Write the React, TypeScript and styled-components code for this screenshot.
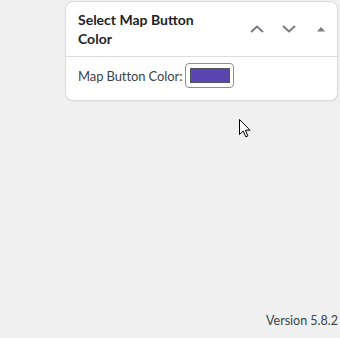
import React from "react";
import styled, { createGlobalStyle } from "styled-components";

const GlobalStyle = createGlobalStyle`
  html, body {
    margin: 0;
    padding: 0;
    background: #f0f0f1;
  }
  body {
    font-family: "Segoe UI", Lato, "Noto Sans", sans-serif;
    color: #1d2327;
  }
`;

function ChevronIcon({ up }: { up?: boolean }) {
  return (
    <svg width="16" height="10" viewBox="0 0 16 10" aria-hidden="true">
      <path
        d={up ? "M2 8 L8 2.5 L14 8" : "M2 2 L8 7.5 L14 2"}
        fill="none"
        stroke="#787c82"
        strokeWidth="2"
      />
    </svg>
  );
}

function TriangleIcon() {
  return (
    <svg width="10" height="6" viewBox="0 0 10 6" aria-hidden="true">
      <path d="M1 5.5 L5 1 L9 5.5 Z" fill="#787c82" />
    </svg>
  );
}

function Cursor() {
  return (
    <CursorStyle width="12" height="19" viewBox="0 0 12 19" aria-hidden="true">
      <path
        d="M0.5 0.5 L0.5 15.5 L4.2 12 L6.8 17.8 L8.9 16.9 L6.4 11.2 L11 11.2 Z"
        fill="#ffffff"
        stroke="#000000"
        strokeWidth="1"
        strokeLinejoin="round"
      />
    </CursorStyle>
  );
}

function App() {
  return (
    <>
      <GlobalStyle />
      <Page>
        <PanelArea>
          <Postbox>
            <PostboxHeader>
              <PostboxTitle>Select Map Button Color</PostboxTitle>
              <HandleActions>
                <HandleButton aria-label="Move up">
                  <ChevronIcon up />
                </HandleButton>
                <HandleButton aria-label="Move down">
                  <ChevronIcon />
                </HandleButton>
                <HandleButton aria-label="Toggle panel">
                  <TriangleIcon />
                </HandleButton>
              </HandleActions>
            </PostboxHeader>
            <PostboxInside>
              <FieldLabel>Map Button Color:</FieldLabel>
              <ColorButton aria-label="Pick color">
                <ColorSwatch color="#5b45b0" />
              </ColorButton>
            </PostboxInside>
          </Postbox>
        </PanelArea>
        <Footer>Version 5.8.2</Footer>
        <Cursor />
      </Page>
    </>
  );
}

const Page = styled.div`
  position: relative;
  min-height: 338px;
  display: flex;
  flex-direction: column;
  box-sizing: border-box;
`;

const PanelArea = styled.div`
  padding: 1px 2px 0 65px;
`;

const Postbox = styled.div`
  background: #ffffff;
  border: 1px solid #dcdcde;
  border-radius: 8px;
  box-shadow: 0 1px 1px rgba(0, 0, 0, 0.04);
`;

const PostboxHeader = styled.div`
  display: flex;
  align-items: center;
  justify-content: space-between;
  border-bottom: 1px solid #dcdcde;
  padding: 8px 0 8px 12px;
  min-height: 38px;
`;

const PostboxTitle = styled.h2`
  margin: 0;
  width: 150px;
  font-size: 14px;
  font-weight: 700;
  line-height: 19px;
  color: #1d2327;
`;

const HandleActions = styled.div`
  display: flex;
  align-items: center;
`;

const HandleButton = styled.button`
  width: 32px;
  height: 36px;
  padding: 0;
  border: 0;
  background: transparent;
  display: flex;
  align-items: center;
  justify-content: center;
  cursor: pointer;
`;

const PostboxInside = styled.div`
  display: flex;
  align-items: center;
  gap: 3px;
  padding: 6px 12px 12px;
`;

const FieldLabel = styled.span`
  font-size: 13px;
  letter-spacing: -0.1px;
  color: #3c434a;
`;

const ColorButton = styled.button`
  width: 49px;
  height: 25px;
  padding: 0;
  box-sizing: border-box;
  border: 1px solid #8c8f94;
  border-radius: 4px;
  background: #ffffff;
  display: flex;
  align-items: center;
  justify-content: center;
`;

const ColorSwatch = styled.span<{ color: string }>`
  display: block;
  width: 40px;
  height: 15px;
  box-sizing: border-box;
  border: 1px solid #50575e;
  background: ${({ color }) => color};
`;

const Footer = styled.footer`
  margin-top: auto;
  padding: 0 2px 8px 0;
  text-align: right;
  font-size: 12.5px;
  line-height: 18px;
  color: #3c434a;
`;

const CursorStyle = styled.svg`
  position: absolute;
  left: 239px;
  top: 119px;
`;

export default App;
